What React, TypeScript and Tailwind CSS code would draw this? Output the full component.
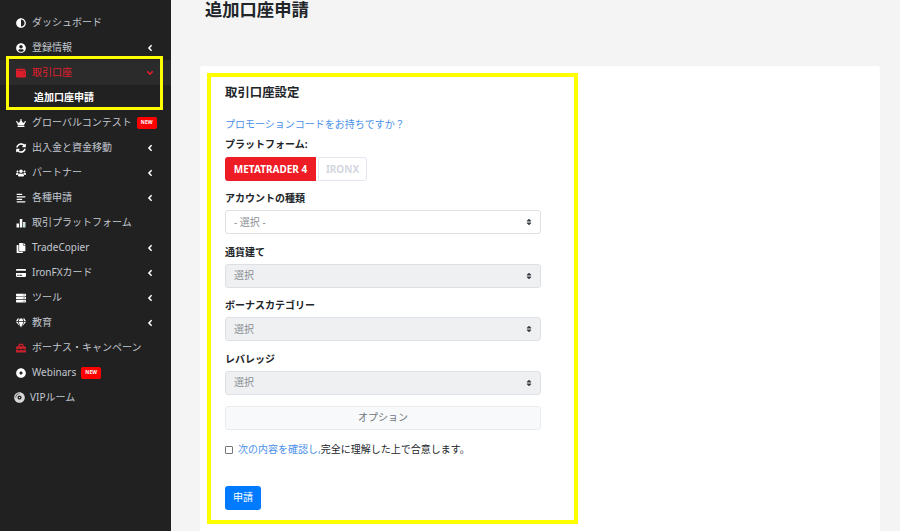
import type { ComponentType } from "react";
import { FaAdjust, FaAlignLeft, FaAngleDown, FaAngleLeft, FaCompactDisc, FaCopy, FaCreditCard, FaCrown, FaDotCircle, FaGem, FaServer, FaSort, FaSyncAlt, FaToolbox, FaUserCircle, FaUsers, FaWallet } from "react-icons/fa";

const FONT = "font-['Noto_Sans','Noto_Sans_CJK_JP',sans-serif]";

type NavItem = {
  label: string;
  icon: ComponentType<{ className?: string; size?: number }>;
  arrow?: boolean;
  badge?: boolean;
  iconClass?: string;
};

function BarsIcon({ className, size }: { className?: string; size?: number }) {
  return (
    <svg viewBox="0 0 10 10" width={size} height={size} className={className} fill="currentColor">
      <rect x="0.5" y="5.5" width="2.5" height="4" />
      <rect x="3.8" y="1" width="2.5" height="8.5" />
      <rect x="7" y="4" width="2.5" height="5.5" fill="#cfe3d8" />
    </svg>
  );
}

const before: NavItem[] = [
  { label: "ダッシュボード", icon: FaAdjust },
  { label: "登録情報", icon: FaUserCircle, arrow: true },
];

const after: NavItem[] = [
  { label: "グローバルコンテスト", icon: FaCrown, badge: true },
  { label: "出入金と資金移動", icon: FaSyncAlt, arrow: true },
  { label: "パートナー", icon: FaUsers, arrow: true },
  { label: "各種申請", icon: FaAlignLeft, arrow: true },
  { label: "取引プラットフォーム", icon: BarsIcon },
  { label: "TradeCopier", icon: FaCopy, arrow: true },
  { label: "IronFXカード", icon: FaCreditCard, arrow: true },
  { label: "ツール", icon: FaServer, arrow: true },
  { label: "教育", icon: FaGem, arrow: true },
  { label: "ボーナス・キャンペーン", icon: FaToolbox, iconClass: "text-[#c8202c]" },
  { label: "Webinars", icon: FaDotCircle, badge: true },
];

function NewBadge() {
  return <span className="ml-[5px] flex h-[12px] w-[20px] shrink-0 items-center justify-center rounded-[2px] bg-[#ff0000] text-[5px] font-bold leading-none text-white">NEW</span>;
}

function Row({ item }: { item: NavItem }) {
  const Icon = item.icon;
  return (
    <div className="flex h-[25px] items-center pl-[16px] pr-[16px] text-[10px] text-[#c2c7d0]">
      <Icon size={10} className={`mr-[6px] shrink-0 ${item.iconClass ?? "text-white"}`} />
      <span className="whitespace-nowrap">{item.label}</span>
      {item.badge && <NewBadge />}
      {item.arrow && <FaAngleLeft size={10} className="ml-auto text-white" />}
    </div>
  );
}

function Field({ label, value, disabled }: { label: string; value: string; disabled?: boolean }) {
  return (
    <div className="mb-[9.5px]">
      <div className="mb-[3px] h-[17px] text-[10px] font-bold leading-[17px] text-[#212529]">{label}</div>
      <div className={`flex h-[24px] items-center justify-between rounded-[3px] border border-[#dde0e4] pl-[8px] pr-[7px] text-[10px] text-[#8a8f94] ${disabled ? "bg-[#eff0f2]" : "bg-white"}`}>
        <span>{value}</span>
        <FaSort size={8} className="text-[#343a40]" />
      </div>
    </div>
  );
}

export default function App() {
  return (
    <div className={`flex h-[531px] w-[900px] overflow-hidden bg-[#f4f4f4] ${FONT}`}>
      <aside className="relative h-full w-[171px] shrink-0 bg-[#212121] pt-[10px]">
        {before.map((item) => <Row key={item.label} item={item} />)}
        <div className="flex h-[25px] items-center bg-[#2b2b2b] pl-[16px] pr-[16px] text-[10px] text-[#e01e2b]">
          <FaWallet size={10} className="mr-[6px] shrink-0" />
          <span>取引口座</span>
          <FaAngleDown size={10} className="ml-auto" />
        </div>
        <div className="flex h-[25px] items-center pl-[34px] text-[10px] font-bold text-white">追加口座申請</div>
        {after.map((item) => <Row key={item.label} item={item} />)}
        <div className="flex h-[25px] items-center pl-[14px] text-[10px] text-[#c2c7d0]">
          <FaCompactDisc size={11} className="mr-[5px] text-[#d8d8d8]" />
          <span>VIPルーム</span>
        </div>
        <div className="absolute left-[6px] top-[56px] h-[54px] w-[157px] border-[3px] border-[#ffff00]" />
      </aside>

      <main className="min-w-0 flex-1 pl-[29px] pr-[20px]">
        <h1 className="h-[66px] pl-[5px] text-[17.3px] font-bold leading-[20px] text-[#212529]">追加口座申請</h1>
        <div className="relative h-[500px] rounded-[3px] bg-white pl-[25px] pt-[17px]">
          <div className="h-[33px] text-[12.4px] font-bold leading-[20px] text-[#212529]">取引口座設定</div>
          <div className="h-[20px] text-[10px] leading-[17px] text-[#4a90e8]">プロモーションコードをお持ちですか？</div>
          <div className="mb-[4px] h-[17px] text-[10px] font-bold leading-[17px] text-[#212529]">プラットフォーム:</div>
          <div className="mb-[9px] flex">
            <div className="flex h-[24px] w-[91px] items-center justify-center rounded-l-[3px] bg-[#ee1c25] text-[10px] font-bold text-white">METATRADER 4</div>
            <div className="ml-[2px] flex h-[24px] w-[49px] items-center justify-center rounded-r-[3px] border border-[#e4e6ef] text-[10px] font-bold text-[#d4d7e0]">IRONX</div>
          </div>
          <div className="w-[316px]">
            <Field label="アカウントの種類" value="- 選択 -" />
            <Field label="通貨建て" value="選択" disabled />
            <Field label="ボーナスカテゴリー" value="選択" disabled />
            <Field label="レバレッジ" value="選択" disabled />
            <div className="mt-[11px] flex h-[24px] items-center justify-center rounded-[3px] border border-[#e9ecef] bg-[#f8f9fa] text-[10px] text-[#6c757d]">オプション</div>
            <div className="mt-[11.5px] flex h-[17px] items-center text-[10px] text-[#212529]">
              <span className="mr-[5px] h-[8px] w-[8px] rounded-[1px] border border-[#767676] bg-white" />
              <span className="text-[#4a90e8]">次の内容を確認し,</span>
              <span>完全に理解した上で合意します。</span>
            </div>
            <div className="mt-[27.5px] flex h-[24px] w-[36px] items-center justify-center rounded-[3px] bg-[#007bff] text-[10px] text-white">申請</div>
          </div>
          <div className="absolute left-[7px] top-[7px] h-[451px] w-[371px] border-4 border-[#ffff00]" />
        </div>
      </main>
    </div>
  );
}
